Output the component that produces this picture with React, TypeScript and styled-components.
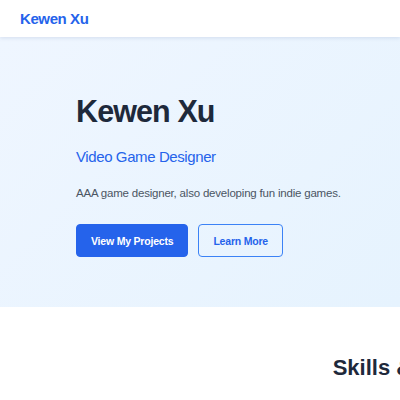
import React from "react";
import styled, { createGlobalStyle } from "styled-components";

const GlobalStyle = createGlobalStyle`
  html, body {
    margin: 0;
    padding: 0;
    overflow: hidden;
    background: #ffffff;
  }
  body {
    font-family: "Liberation Sans", Arial, Helvetica, sans-serif;
  }
  * {
    box-sizing: border-box;
  }
`;

const Page = styled.div`
  width: 400px;
  min-height: 400px;
`;

const Header = styled.header`
  position: relative;
  z-index: 2;
  height: 37px;
  display: flex;
  align-items: center;
  padding: 0 20px;
  background: #ffffff;
  box-shadow: 0 1px 4px rgba(30, 64, 120, 0.13);
`;

const Logo = styled.a`
  color: #2563eb;
  font-size: 15px;
  font-weight: 700;
  letter-spacing: -0.4px;
  text-decoration: none;
`;

const Hero = styled.section`
  height: 270px;
  padding: 56px 0 0 76px;
  background: linear-gradient(135deg, #eff6ff 0%, #e6f3fe 100%);
`;

const Title = styled.h1`
  margin: 0;
  color: #1e293b;
  font-size: 30.5px;
  font-weight: 700;
  letter-spacing: -0.9px;
  line-height: 36px;
`;

const Subtitle = styled.p`
  margin: 18px 0 0;
  color: #2563eb;
  font-size: 15px;
  letter-spacing: -0.4px;
  line-height: 20px;
`;

const Description = styled.p`
  margin: 18px 0 0;
  color: #4b5563;
  font-size: 11.5px;
  letter-spacing: -0.2px;
  line-height: 16px;
`;

const Actions = styled.div`
  display: flex;
  gap: 10px;
  margin-top: 23px;
`;

const Button = styled.a<{ $primary?: boolean }>`
  display: inline-flex;
  align-items: center;
  justify-content: center;
  height: 33px;
  padding: 0 14px;
  border-radius: 4px;
  font-size: 10.5px;
  font-weight: 700;
  letter-spacing: -0.2px;
  text-decoration: none;
  color: ${(p) => (p.$primary ? "#ffffff" : "#2563eb")};
  background: ${(p) => (p.$primary ? "#2563eb" : "transparent")};
  border: 1.5px solid ${(p) => (p.$primary ? "#2563eb" : "#3b82f6")};
`;

const Skills = styled.section`
  width: 850px;
  padding-top: 48px;
  text-align: center;
`;

const SectionTitle = styled.h2`
  margin: 0;
  color: #1e293b;
  font-size: 22px;
  font-weight: 700;
  line-height: 26px;
`;

export default function App() {
  return (
    <Page>
      <GlobalStyle />
      <Header>
        <Logo href="#">Kewen Xu</Logo>
      </Header>
      <Hero>
        <Title>Kewen Xu</Title>
        <Subtitle>Video Game Designer</Subtitle>
        <Description>AAA game designer, also developing fun indie games.</Description>
        <Actions>
          <Button $primary href="#">View My Projects</Button>
          <Button href="#">Learn More</Button>
        </Actions>
      </Hero>
      <Skills>
        <SectionTitle>Skills &amp; Expertise</SectionTitle>
      </Skills>
    </Page>
  );
}
